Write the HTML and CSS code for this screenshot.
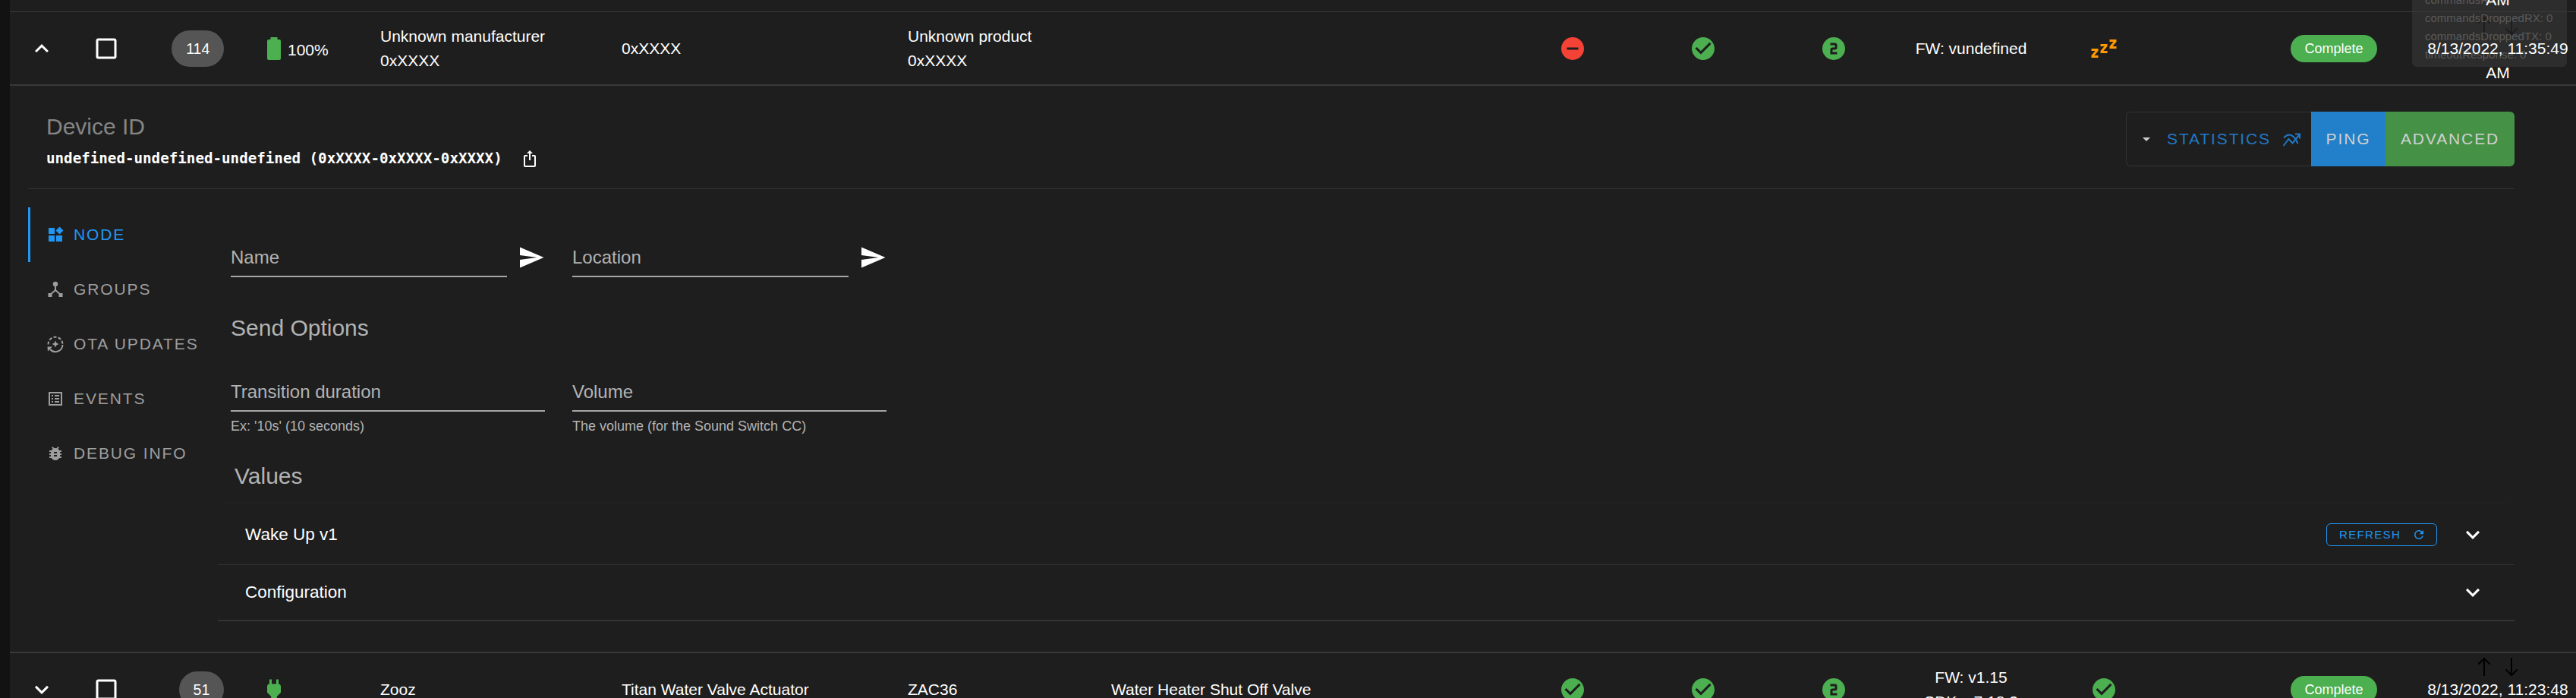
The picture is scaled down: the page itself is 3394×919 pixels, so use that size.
FILE: index.html
```html
<!DOCTYPE html>
<html lang="en">
<head>
<meta charset="utf-8">
<title>Z-Wave nodes</title>
<link rel="stylesheet" href="styles.css">
</head>
<body>
<main class="page">
  <div class="tooltip">
    <div>commandsRX: 0</div>
    <div>commandsDroppedRX: 0</div>
    <div>commandsDroppedTX: 0</div>
    <div>timeoutResponse: 0</div>
  </div>

  <div class="row row-prev">
    <div class="date-tail">AM</div>
  </div>

  <div class="row row-node">
    <svg class="i36 cell-c" viewBox="0 0 24 24"><path d="M7.41,15.41L12,10.83L16.59,15.41L18,14L12,8L6,14L7.41,15.41Z"/></svg>
    <svg class="i36 cell-c" viewBox="0 0 24 24"><path d="M19,3H5C3.89,3 3,3.89 3,5V19A2,2 0 0,0 5,21H19A2,2 0 0,0 21,19V5C21,3.89 20.1,3 19,3M19,5V19H5V5H19Z"/></svg>
    <div class="node-chip">114</div>
    <div class="status">
      <svg class="i36 green" viewBox="0 0 24 24"><path d="M16.67,4H15V2H9V4H7.33A1.33,1.33 0 0,0 6,5.33V20.67C6,21.4 6.6,22 7.33,22H16.67A1.33,1.33 0 0,0 18,20.67V5.33C18,4.6 17.4,4 16.67,4Z"/></svg>
      <span class="pct">100%</span>
    </div>
    <div>Unknown manufacturer<br>0xXXXX</div>
    <div>0xXXXX</div>
    <div>Unknown product<br>0xXXXX</div>
    <div></div>
    <svg class="i36 cell-c red" viewBox="0 0 24 24"><path d="M17,13H7V11H17M12,2A10,10 0 0,0 2,12A10,10 0 0,0 12,22A10,10 0 0,0 22,12A10,10 0 0,0 12,2Z"/></svg>
    <svg class="i36 cell-c green" viewBox="0 0 24 24"><path d="M12 2C6.5 2 2 6.5 2 12S6.5 22 12 22 22 17.5 22 12 17.5 2 12 2M10 17L5 12L6.41 10.59L10 14.17L17.59 6.58L19 8L10 17Z"/></svg>
    <svg class="i36 cell-c green" viewBox="0 0 24 24"><path d="M9,7V9H13V11H11A2,2 0 0,0 9,13V17H11H15V15H11V13H13A2,2 0 0,0 15,11V9A2,2 0 0,0 13,7H9M12,2A10,10 0 0,1 22,12A10,10 0 0,1 12,22A10,10 0 0,1 2,12A10,10 0 0,1 12,2Z"/></svg>
    <div class="center">FW: vundefined</div>
    <svg class="i36 cell-c orange" viewBox="0 0 24 24"><path d="M23,12H17V10L20.39,6H17V4H23V6L19.62,10H23V12M15,16H9V14L12.39,10H9V8H15V10L11.62,14H15V16M7,20H1V18L4.39,14H1V12H7V14L3.62,18H7V20Z"/></svg>
    <div></div>
    <div class="complete">Complete</div>
    <div class="date">
      <div class="arrows">
        <svg class="arrow" viewBox="0 0 18 26"><path d="M9 25V2M1.5 9.5L9 2l7.5 7.5"/></svg>
        <svg class="arrow" viewBox="0 0 18 26"><path d="M9 1v23M1.5 16.5L9 24l7.5-7.5"/></svg>
      </div>
      <div class="date-text">8/13/2022, 11:35:49 AM</div>
    </div>
  </div>

  <section class="details">
    <header class="details-head">
      <div>
        <div class="device-label">Device ID</div>
        <div class="device-id">
          <span>undefined-undefined-undefined (0xXXXX-0xXXXX-0xXXXX)</span>
          <svg class="i24" viewBox="0 0 24 24"><path d="M12,1L8,5H11V14H13V5H16M18,23H6C4.89,23 4,22.1 4,21V9A2,2 0 0,1 6,7H9V9H6V21H18V9H15V7H18A2,2 0 0,1 20,9V21A2,2 0 0,1 18,23Z"/></svg>
        </div>
      </div>
      <div class="btn-group">
        <div class="btn btn-stats">
          <svg class="i24 caret" viewBox="0 0 24 24"><path d="M7,10L12,15L17,10H7Z"/></svg>
          <span>STATISTICS</span>
          <svg class="i24 stats-icon" viewBox="0 0 24 24"><path d="M1.5 21L8.5 12l5 5.5L22.5 6.5M2 10.5C8 4 15 5 20.5 18"/><path d="M17 5.5h6v6"/></svg>
        </div>
        <div class="btn btn-ping">PING</div>
        <div class="btn btn-adv">ADVANCED</div>
      </div>
    </header>

    <div class="details-body">
      <nav class="tabs">
        <div class="tab tab-active">
          <svg class="i24" viewBox="0 0 24 24"><path d="M3,3H11V11H3ZM3,13H11V21H3ZM13,13H21V21H13ZM17.5,1.5L22.5,6.5L17.5,11.5L12.5,6.5Z"/></svg>
          <span>NODE</span>
        </div>
        <div class="tab">
          <svg class="i24" viewBox="0 0 24 24"><circle cx="12" cy="5" r="3.2"/><path d="M11 7h2v5.5l5 4.5-1.3 1.5L12 14.3l-4.7 4.2L6 17l5-4.5z"/><path d="M2.5 17h5v5h-5zM16.500 17h5v5h-5z"/></svg>
          <span>GROUPS</span>
        </div>
        <div class="tab">
          <svg class="i24" viewBox="0 0 24 24"><path class="ota-line" d="M2.500 12.500A9.500 9.500 0 0 1 21.500 12" stroke-dasharray="4 2.300"/><path class="ota-line" d="M21.500 13A9.500 9.500 0 0 1 5 19"/><path d="M1.500 15.500h6.500l-6 6zM12 7.500l1.400 3.100 3.100 1.400-3.100 1.400-1.400 3.100-1.400-3.100-3.100-1.400 3.100-1.400z"/></svg>
          <span>OTA UPDATES</span>
        </div>
        <div class="tab">
          <svg class="i24" viewBox="0 0 24 24"><path d="M3 3H21V21H3ZM5 5V19H19V5ZM7 7h2v2H7zM11 7h6v2h-6zM7 11h2v2H7zM11 11h6v2h-6zM7 15h2v2H7zM11 15h6v2h-6z" fill-rule="evenodd"/></svg>
          <span>EVENTS</span>
        </div>
        <div class="tab">
          <svg class="i24" viewBox="0 0 24 24"><path d="M14,12H10V10H14M14,16H10V14H14M20,8H17.19C16.74,7.22 16.12,6.55 15.37,6.04L17,4.41L15.59,3L13.42,5.17C12.96,5.06 12.5,5 12,5C11.5,5 11.04,5.06 10.59,5.17L8.41,3L7,4.41L8.62,6.04C7.88,6.55 7.26,7.22 6.81,8H4V10H6.09C6.04,10.33 6,10.66 6,11V12H4V14H6V15C6,15.34 6.04,15.67 6.09,16H4V18H6.81C7.85,19.79 9.78,21 12,21C14.22,21 16.15,19.79 17.19,18H20V16H17.91C17.96,15.67 18,15.34 18,15V14H20V12H18V11C18,10.66 17.96,10.33 17.91,10H20V8Z"/></svg>
          <span>DEBUG INFO</span>
        </div>
      </nav>

      <div class="content">
        <div class="fields">
          <div class="field-send">
            <div class="field">Name</div>
            <svg class="i36 send" viewBox="0 0 24 24"><path d="M2,21L23,12L2,3V10L17,12L2,14V21Z"/></svg>
          </div>
          <div class="field-send">
            <div class="field">Location</div>
            <svg class="i36 send" viewBox="0 0 24 24"><path d="M2,21L23,12L2,3V10L17,12L2,14V21Z"/></svg>
          </div>
        </div>

        <h2 class="heading heading-send">Send Options</h2>

        <div class="fields fields-opts">
          <div>
            <div class="field">Transition duration</div>
            <div class="hint">Ex: '10s' (10 seconds)</div>
          </div>
          <div>
            <div class="field">Volume</div>
            <div class="hint">The volume (for the Sound Switch CC)</div>
          </div>
        </div>

        <h2 class="heading heading-values">Values</h2>

        <div class="panels">
          <div class="panel panel-first">
            <span class="panel-title">Wake Up v1</span>
            <div class="refresh">
              <span>REFRESH</span>
              <svg class="i18" viewBox="0 0 24 24"><path d="M17.65,6.35C16.2,4.9 14.21,4 12,4A8,8 0 0,0 4,12A8,8 0 0,0 12,20C15.73,20 18.84,17.45 19.73,14H17.65C16.83,16.33 14.61,18 12,18A6,6 0 0,1 6,12A6,6 0 0,1 12,6C13.66,6 15.14,6.69 16.22,7.78L13,11H20V4L17.65,6.35Z"/></svg>
            </div>
            <svg class="i36" viewBox="0 0 24 24"><path d="M7.41,8.58L12,13.17L16.59,8.58L18,10L12,16L6,10L7.41,8.58Z"/></svg>
          </div>
          <div class="panel panel-last">
            <span class="panel-title">Configuration</span>
            <svg class="i36" viewBox="0 0 24 24"><path d="M7.41,8.58L12,13.17L16.59,8.58L18,10L12,16L6,10L7.41,8.58Z"/></svg>
          </div>
        </div>
      </div>
    </div>
  </section>

  <div class="row row-node row-open">
    <svg class="i36 cell-c" viewBox="0 0 24 24"><path d="M7.41,8.58L12,13.17L16.59,8.58L18,10L12,16L6,10L7.41,8.58Z"/></svg>
    <svg class="i36 cell-c" viewBox="0 0 24 24"><path d="M19,3H5C3.89,3 3,3.89 3,5V19A2,2 0 0,0 5,21H19A2,2 0 0,0 21,19V5C21,3.89 20.1,3 19,3M19,5V19H5V5H19Z"/></svg>
    <div class="node-chip">51</div>
    <div class="status">
      <svg class="i36 green" viewBox="0 0 24 24"><path d="M16,7V3H14V7H10V3H8V7C7,7 6,8 6,9V14.5L9.5,18V21H14.5V18L18,14.5V9C18,8 17,7 16,7Z"/></svg>
    </div>
    <div>Zooz</div>
    <div>Titan Water Valve Actuator</div>
    <div>ZAC36</div>
    <div>Water Heater Shut Off Valve</div>
    <svg class="i36 cell-c green" viewBox="0 0 24 24"><path d="M12 2C6.5 2 2 6.5 2 12S6.5 22 12 22 22 17.5 22 12 17.5 2 12 2M10 17L5 12L6.41 10.59L10 14.17L17.59 6.58L19 8L10 17Z"/></svg>
    <svg class="i36 cell-c green" viewBox="0 0 24 24"><path d="M12 2C6.5 2 2 6.5 2 12S6.5 22 12 22 22 17.5 22 12 17.5 2 12 2M10 17L5 12L6.41 10.59L10 14.17L17.59 6.58L19 8L10 17Z"/></svg>
    <svg class="i36 cell-c green" viewBox="0 0 24 24"><path d="M9,7V9H13V11H11A2,2 0 0,0 9,13V17H11H15V15H11V13H13A2,2 0 0,0 15,11V9A2,2 0 0,0 13,7H9M12,2A10,10 0 0,1 22,12A10,10 0 0,1 12,22A10,10 0 0,1 2,12A10,10 0 0,1 12,2Z"/></svg>
    <div class="center">FW: v1.15<br>SDK: v7.18.3</div>
    <svg class="i36 cell-c green" viewBox="0 0 24 24"><path d="M12 2C6.5 2 2 6.5 2 12S6.5 22 12 22 22 17.5 22 12 17.5 2 12 2M10 17L5 12L6.41 10.59L10 14.17L17.59 6.58L19 8L10 17Z"/></svg>
    <div></div>
    <div class="complete">Complete</div>
    <div class="date">
      <div class="arrows">
        <svg class="arrow" viewBox="0 0 18 26"><path d="M9 25V2M1.5 9.5L9 2l7.5 7.5"/></svg>
        <svg class="arrow" viewBox="0 0 18 26"><path d="M9 1v23M1.5 16.5L9 24l7.5-7.5"/></svg>
      </div>
      <div class="date-text">8/13/2022, 11:23:48 AM</div>
    </div>
  </div>
</main>
</body>
</html>
```

FILE: styles.css
```css
* { box-sizing: border-box; }

html, body {
  margin: 0;
  height: 919px;
  overflow: hidden;
  background: #121212;
}

body {
  font-family: "Liberation Sans", Arial, sans-serif;
  font-size: 21px;
  line-height: 32px;
  color: #fff;
}

svg { display: block; fill: currentColor; flex: none; }
.i18 { width: 18px; height: 18px; }
.i24 { width: 24px; height: 24px; }
.i36 { width: 36px; height: 36px; }
.green { color: #4caf50; }
.red { color: #f44336; }
.orange { color: #ff9800; }

.page {
  position: relative;
  margin-left: 13px;
  height: 919px;
  background: #1e1e1e;
  overflow: hidden;
}

/* table rows */
.row {
  display: grid;
  grid-template-columns: 84px 85px 113px 206px 318px 377px 268px 546px 124px 220px 124px 238px 112px 132px 230px 202px;
  align-items: center;
}

.row-prev {
  height: 16px;
  border-bottom: 1px solid #383838;
  overflow: hidden;
  align-items: end;
}

.date-tail {
  grid-column: 16;
  position: relative;
  z-index: 2;
  text-align: center;
  height: 15px;
  line-height: 0;
}

.row-node {
  height: 97px;
  border-bottom: 2px solid #383838;
}

.row-open {
  height: 95px;
  border-bottom: 0;
}

.cell-c { justify-self: center; }

.node-chip {
  justify-self: end;
  height: 48px;
  line-height: 48px;
  padding: 0 18.75px;
  border-radius: 24px;
  background: #555;
  font-size: 19.5px;
}

.status {
  display: flex;
  align-items: center;
  padding-left: 48px;
}

.pct { padding-top: 4px; }
.center { text-align: center; }

.complete {
  justify-self: center;
  height: 36px;
  line-height: 36px;
  padding: 0 18px;
  border-radius: 18px;
  background: #4caf50;
  font-size: 18px;
}

.date {
  align-self: start;
  text-align: center;
}

.arrows {
  display: flex;
  justify-content: center;
  gap: 18px;
  height: 32px;
  padding-top: 5px;
}

.arrow {
  width: 18px;
  height: 26px;
  fill: none;
  stroke: #000;
  stroke-width: 2;
}

.date-text {
  position: relative;
  z-index: 2;
  padding: 0 8px;
}

.tooltip {
  position: absolute;
  z-index: 1;
  top: -12px;
  right: 12px;
  width: 204px;
  height: 100px;
  padding: 0 17px;
  border-radius: 6px;
  background: rgba(60, 60, 60, .5);
  color: #5a5a5a;
  font-size: 15px;
  line-height: 24px;
  white-space: nowrap;
}

/* expanded details */
.details {
  height: 747px;
  padding: 0 81px 0 24px;
  border-bottom: 2px solid #383838;
}

.details-head {
  display: flex;
  justify-content: space-between;
  align-items: flex-start;
  height: 136px;
  padding-top: 34px;
  margin-bottom: 24px;
  border-bottom: 1px solid #333;
}

.device-label {
  height: 40px;
  line-height: 40px;
  padding-left: 24px;
  font-size: 30px;
  color: #858585;
}

.device-id {
  display: flex;
  align-items: center;
  gap: 24px;
  height: 32px;
  margin-top: 6px;
  padding-left: 24px;
  font-family: "DejaVu Sans Mono", "Liberation Mono", monospace;
  font-size: 19.2px;
  font-weight: 700;
}

.btn-group { display: flex; height: 72px; }

.btn {
  display: flex;
  align-items: center;
  justify-content: center;
  font-size: 21px;
  letter-spacing: 1.875px;
}

.btn-stats {
  width: 244px;
  gap: 15px;
  justify-content: flex-start;
  padding-left: 14px;
  border: 1px solid #333;
  border-right: 0;
  border-radius: 6px 0 0 6px;
  color: #2079c6;
}

.caret { color: #ccc; }

.stats-icon {
  fill: none;
  stroke: currentColor;
  stroke-width: 2;
}

.btn-ping {
  width: 98px;
  background: #2280ca;
  color: #d0d0d0;
}

.btn-adv {
  width: 170px;
  background: #459246;
  color: #d0d0d0;
  border-radius: 0 6px 6px 0;
}

.details-body { display: flex; }

.tabs { width: 267px; flex: none; }

.tab {
  display: flex;
  align-items: center;
  gap: 12px;
  height: 72px;
  padding-left: 24px;
  color: #9e9e9e;
  font-size: 21px;
  letter-spacing: 1.875px;
}

.tab-active {
  color: #2196f3;
  box-shadow: inset 3px 0 0 #2196f3;
}

.ota-line {
  fill: none;
  stroke: currentColor;
  stroke-width: 2;
}

.content {
  flex: 1;
  padding-top: 49px;
}

.fields {
  display: grid;
  grid-template-columns: 414px 414px;
  column-gap: 36px;
}

.field-send {
  display: flex;
  gap: 14px;
}

.field-send .field { flex: 1; }
.send { margin-top: -1px; }

.field {
  height: 43px;
  line-height: 34px;
  border-bottom: 2px solid #a6a6a6;
  font-size: 24px;
  color: #b3b3b3;
}

.hint {
  margin-top: 7px;
  line-height: 24px;
  font-size: 18px;
  color: #b3b3b3;
}

.heading {
  height: 40px;
  margin: 0;
  line-height: 40px;
  font-size: 30px;
  font-weight: 400;
  color: #b3b3b3;
}

.heading-send { margin: 47px 0; }
.heading-values { margin: 34px 0 16px 5px; }

.panels {
  margin-left: -17px;
  border-top: 1px solid #232323;
  border-radius: 6px 6px 0 0;
}

.panel {
  display: flex;
  align-items: center;
  padding: 0 37px 0 36px;
  border-bottom: 1px solid #333;
  font-size: 22.5px;
}

.panel-title { flex: 1; }
.panel-first { height: 80px; }
.panel-last { height: 74px; border-bottom-width: 2px; }

.refresh {
  display: flex;
  align-items: center;
  justify-content: space-between;
  width: 146px;
  height: 30px;
  margin-right: 29px;
  padding: 0 14px 0 16px;
  border: 1px solid #2196f3;
  border-radius: 6px;
  color: #2196f3;
  font-size: 15px;
  letter-spacing: 1.34px;
}
```
